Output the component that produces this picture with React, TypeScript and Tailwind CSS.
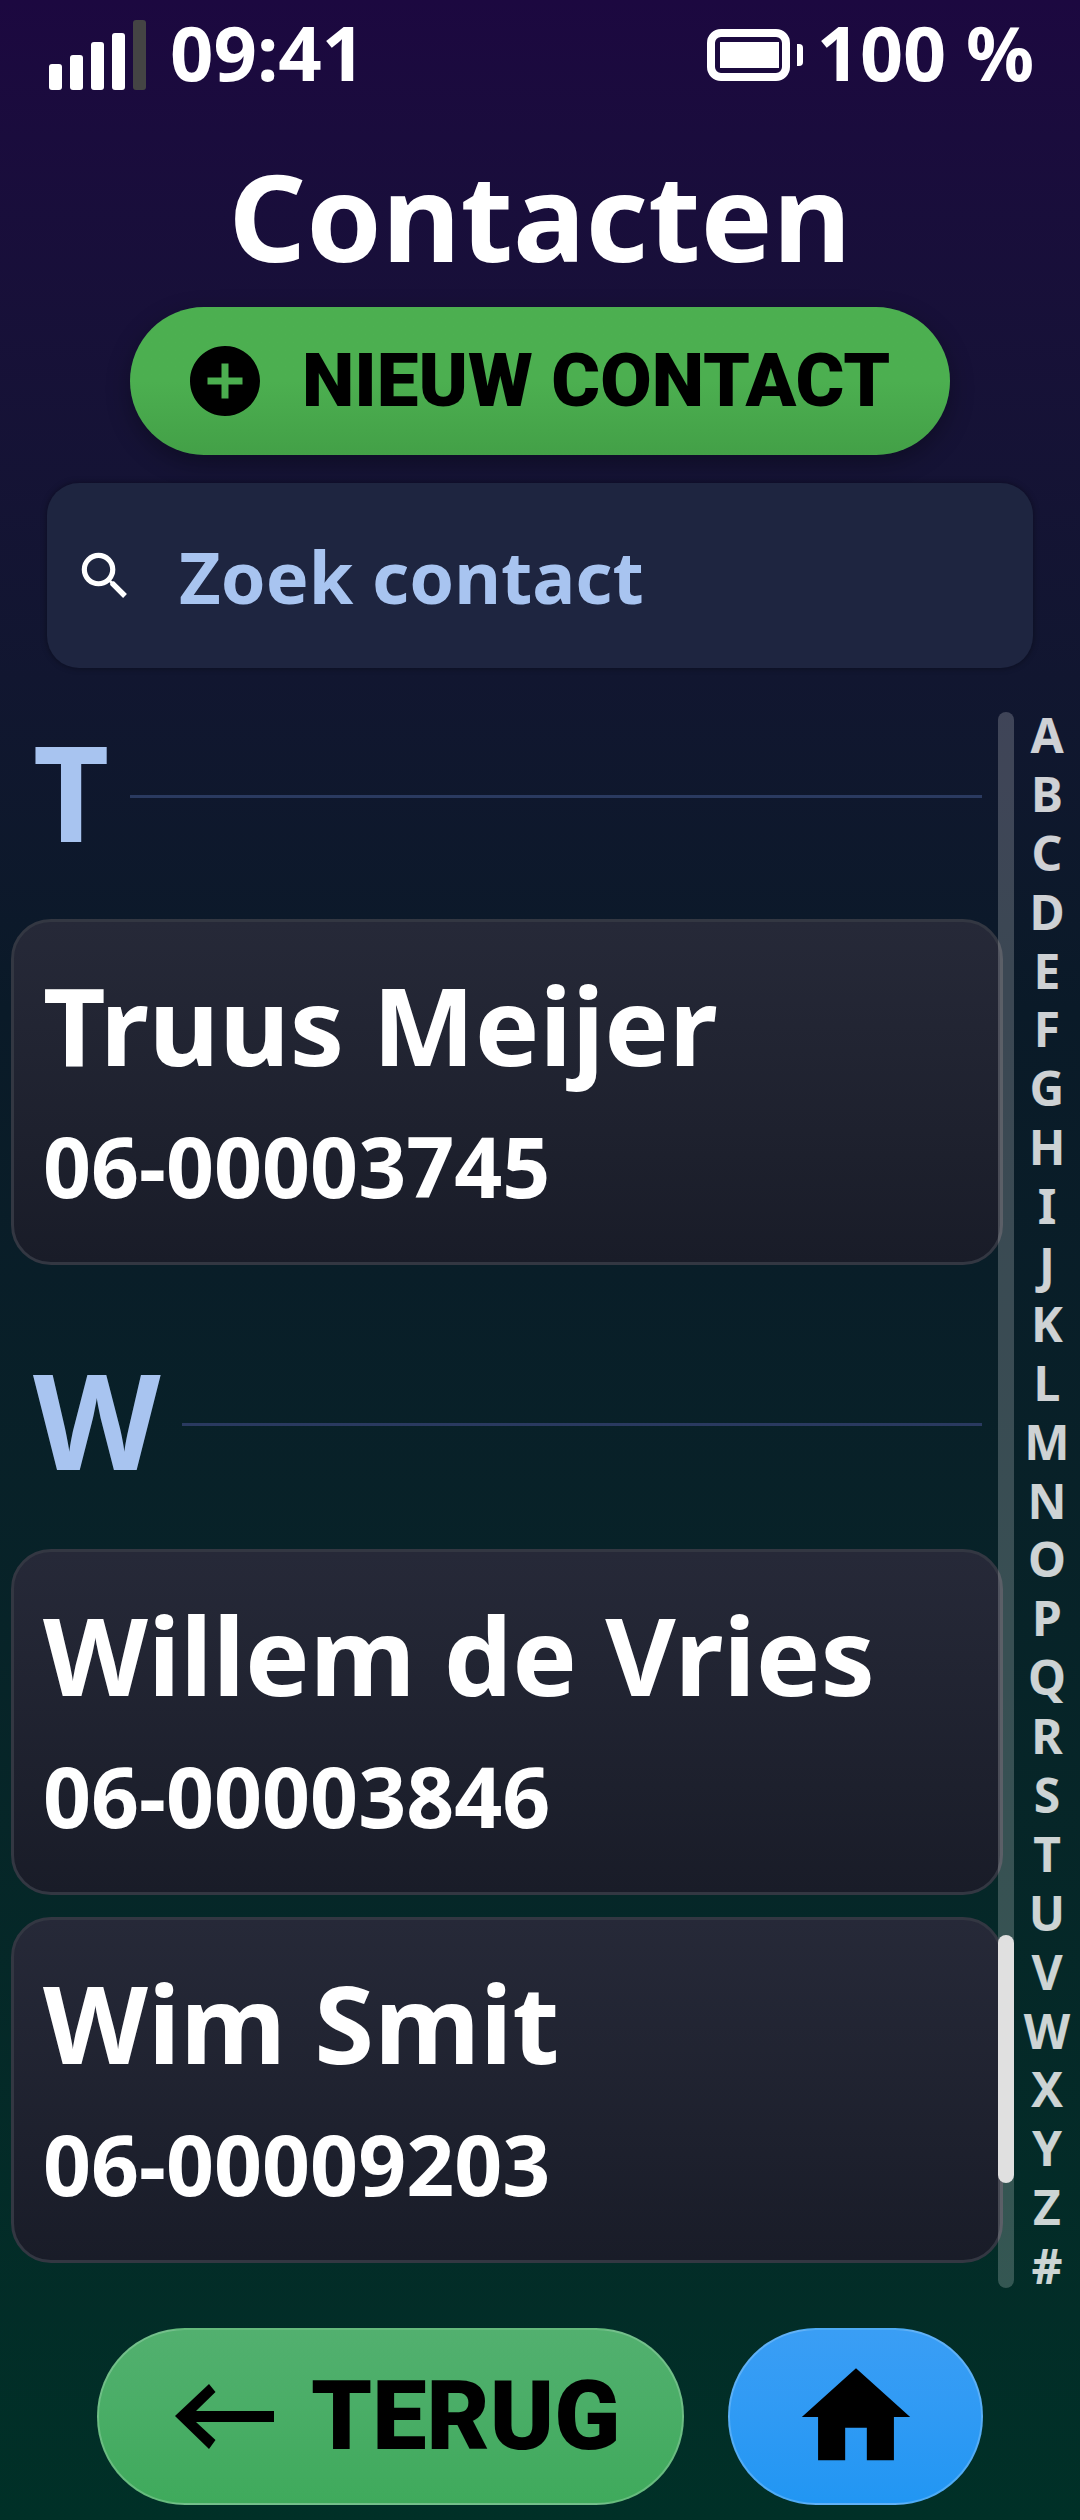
import React from 'react';
import { MdAddCircle, MdHome, MdSearch } from 'react-icons/md';

const letters = 'ABCDEFGHIJKLMNOPQRSTUVWXYZ#'.split('');

const ContactCard = ({ name, phone }: { name: string; phone: string }) => (
  <div className="h-[346px] rounded-[40px] border-[3px] border-[#333742] bg-gradient-to-b from-[#262938] to-[#191c28] pl-[29px] pt-[27px]">
    <div className="h-[150px] text-[108.5px] leading-[150px] font-bold text-white">{name}</div>
    <div className="mt-[12px] h-[110px] text-[84px] leading-[110px] font-bold text-white">{phone}</div>
  </div>
);

const SectionHeader = ({ letter }: { letter: string }) => (
  <div className="flex h-[180px] items-center pr-[21px]">
    <span className="ml-[22px] pb-[10px] text-[132px] leading-[180px] font-bold text-[#a8c4f0]">{letter}</span>
    <div className="ml-[21px] h-[3px] flex-1 bg-[#2a3a60]" />
  </div>
);

export default function App() {
  return (
    <div className="flex h-[2520px] w-[1080px] flex-col overflow-hidden bg-gradient-to-b from-[#1c0840] via-[#0a1a28] via-40% to-[#003027] font-['Noto_Sans',sans-serif]">
      {/* Status bar */}
      <div className="flex h-[110px] items-center justify-between pl-[49px] pr-[46px]">
        <div className="flex items-center">
          <div className="flex h-[70px] items-end gap-[8px]">
            <div className="h-[26px] w-[13px] rounded-[3px] bg-white" />
            <div className="h-[35px] w-[13px] rounded-[3px] bg-white" />
            <div className="h-[48px] w-[13px] rounded-[3px] bg-white" />
            <div className="h-[57px] w-[13px] rounded-[3px] bg-white" />
            <div className="h-[70px] w-[13px] rounded-[3px] bg-[#444444]" />
          </div>
          <span className="ml-[24px] pb-[6px] text-[76px] leading-[80px] font-bold text-white">09:41</span>
        </div>
        <div className="flex items-center">
          <svg width="96" height="52" viewBox="0 0 96 52" fill="none">
            <rect x="4" y="4" width="75" height="44" rx="10" stroke="white" strokeWidth="8" />
            <rect x="13" y="13" width="59" height="26" fill="white" />
            <path d="M90 15h2a4 4 0 0 1 4 4v14a4 4 0 0 1-4 4h-2z" fill="white" />
          </svg>
          <span className="ml-[14px] pb-[6px] text-[75.5px] leading-[80px] font-bold text-white">100 %</span>
        </div>
      </div>

      <h1 className="flex h-[197px] items-center justify-center pt-[14px] text-[121px] font-bold text-white">Contacten</h1>

      <div className="mx-auto flex h-[148px] w-[820px] items-center rounded-[74px] bg-gradient-to-b from-[#4caf50] via-[#4caf50] to-[#43a047] pl-[53px] shadow-[0_8px_24px_rgba(0,0,0,0.3)]">
        <MdAddCircle size={84} className="text-black" />
        <span className="ml-[35px] font-['Roboto',sans-serif] text-[74.5px] font-black text-black">NIEUW CONTACT</span>
      </div>

      <div className="mx-[47px] mt-[28px] flex h-[185px] items-center rounded-[32px] bg-[#1e2540] pl-[27px] shadow-[0_0_6px_rgba(0,0,0,0.4)]">
        <MdSearch size={62} className="text-white" />
        <span className="ml-[43px] text-[72px] font-bold text-[#a8c4f0]">Zoek contact</span>
      </div>

      <div className="relative mt-[38px] flex h-[1590px]">
        <div className="w-[1003px] pl-[11px]">
          <SectionHeader letter="T" />
          <div className="mt-[33px]">
            <ContactCard name="Truus Meijer" phone="06-00003745" />
          </div>
          <div className="mt-[69px]">
            <SectionHeader letter="W" />
          </div>
          <div className="mt-[35px] flex flex-col gap-[22px]">
            <ContactCard name="Willem de Vries" phone="06-00003846" />
            <ContactCard name="Wim Smit" phone="06-00009203" />
          </div>
        </div>

        {/* scrollbar */}
        <div className="absolute top-[6px] left-[998px] h-[1576px] w-[16px] rounded-full bg-white/20" />
        <div className="absolute top-[1229px] left-[998px] h-[248px] w-[16px] rounded-full bg-[#e0e0e0]" />

        <div className="ml-[11px] flex w-[66px] flex-col">
          {letters.map((l) => (
            <div key={l} className="h-[58.9px] text-center text-[48px] leading-[58.9px] font-bold text-white/80">
              {l}
            </div>
          ))}
        </div>
      </div>

      {/* Bottom nav */}
      <div className="mt-[32px] flex h-[177px] pl-[97px]">
        <div className="flex h-full w-[587px] items-center rounded-[88px] border-2 border-white/20 bg-gradient-to-b from-[#52b06f] to-[#3faa5c] pl-[76px]">
          <svg width="99" height="65" viewBox="0 0 99 65" className="shrink-0">
            <path d="M0 32 L34 0 L40.5 8 L21 27 H99 V38 H21 L40.5 56 L34 65 Z" fill="black" />
          </svg>
          <span className="ml-[37px] font-['Roboto',sans-serif] text-[97px] font-black text-black">TERUG</span>
        </div>
        <div className="ml-[44px] flex h-full w-[255px] items-center justify-center rounded-[88px] border-2 border-white/20 bg-gradient-to-b from-[#3a9ef5] to-[#2196f3]">
          <MdHome size={130} className="text-black" />
        </div>
      </div>
    </div>
  );
}
